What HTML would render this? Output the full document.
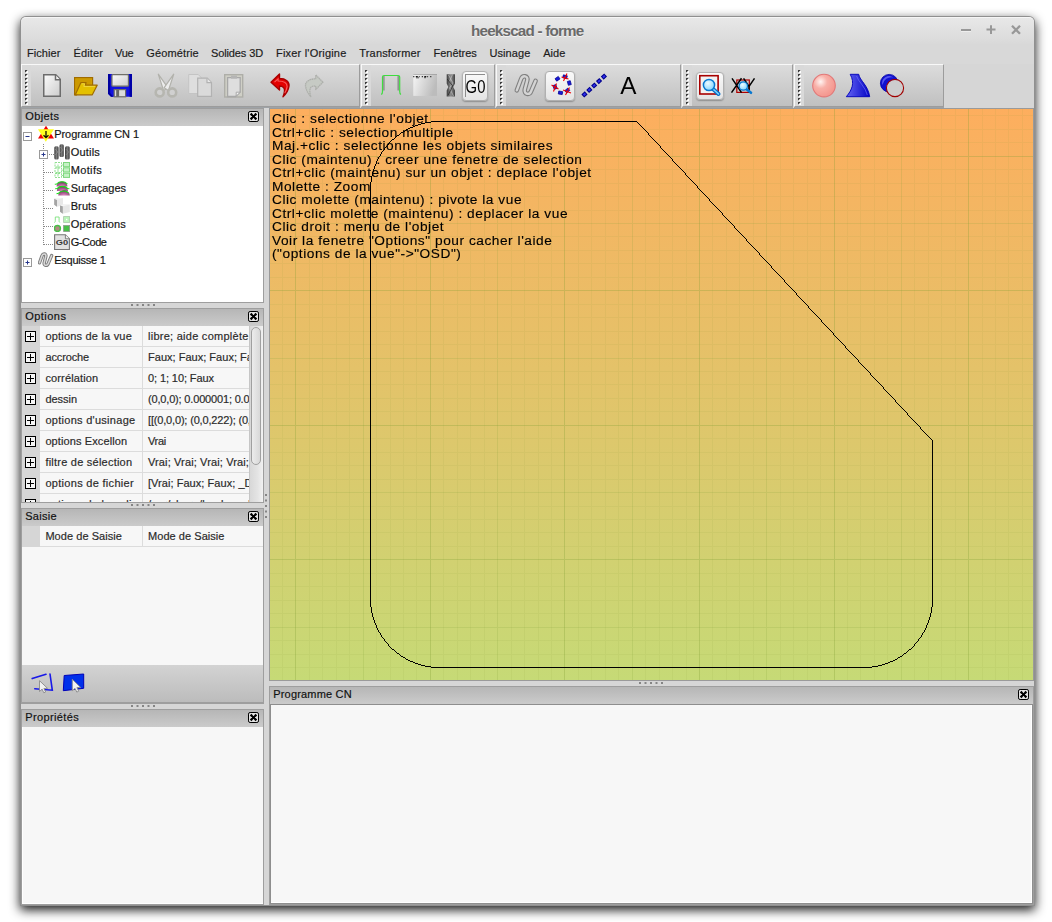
<!DOCTYPE html>
<html>
<head>
<meta charset="utf-8">
<title>heekscad - forme</title>
<style>
*{margin:0;padding:0;box-sizing:border-box;}
html,body{width:1052px;height:922px;overflow:hidden;background:#fff;}
body{font-family:"Liberation Sans",sans-serif;font-size:12px;color:#1a1a1a;position:relative;}
.abs{position:absolute;}
#win{position:absolute;left:21px;top:17px;width:1013px;height:888px;background:#d6d6d6;border-radius:5px 5px 0 0;
 box-shadow:0 0 0 1px #909090, 0 4px 11px 1px rgba(0,0,0,.9);}
#o{position:absolute;left:-21px;top:-17px;width:0;height:0;}
#titlebar{position:absolute;left:21px;top:17px;width:1013px;height:27px;border-radius:5px 5px 0 0;
 background:linear-gradient(#e8e8e8,#d9d9d9);border-top:1px solid #f6f6f6;}
#title{position:absolute;left:471px;top:22px;white-space:nowrap;font-weight:bold;font-size:15.200px;line-height:18px;color:#6a6a6a;text-shadow:0 1px 0 #f2f2f2;letter-spacing:-0.780px;}
.wmin{position:absolute;left:961px;top:29px;width:10px;height:2px;background:#989898;box-shadow:0 1px 0 #eee;}
#menubar{position:absolute;left:21px;top:44px;width:1013px;height:20px;background:#d8d8d8;}
.mi,.tx,.cap,.on,.ov{-webkit-text-stroke:0.180px currentColor;}
.mi{position:absolute;top:47px;font-size:11px;color:#1c1c1c;white-space:nowrap;line-height:13px;}
.tb{position:absolute;top:64px;height:43px;background:linear-gradient(#dcdcdc,#c0c0c0);border-top:1px solid #f8f8f8;border-left:1px solid #f8f8f8;border-bottom:1px solid #9c9c9c;border-right:1px solid #9c9c9c;box-shadow:0 1px 0 #9ea2a6;}
.grip{position:absolute;left:0;top:0;width:9px;height:41px;background:#d9d9d9;}
.grip svg{position:absolute;left:3px;top:5px;}
.ic{position:absolute;top:73px;overflow:visible;width:24px;height:24px;}
.btn{position:absolute;top:69px;width:30px;height:32px;border:1px solid #b0b0b0;border-radius:4px;background:linear-gradient(#fafafa,#e4e4e4);box-shadow:0 1px 1.500px rgba(0,0,0,.28);}
.cap{position:absolute;height:17px;background:linear-gradient(#b6b6b6,#cbcbcb);font-size:11px;line-height:14px;padding-left:3.200px;color:#111;white-space:nowrap;}
.cx{position:absolute;right:4px;top:2px;width:11px;height:11px;}
.pane{position:absolute;background:#f7f7f7;}
.sash{position:absolute;}
.dots{position:absolute;width:23px;height:2px;background-image:linear-gradient(90deg,#8c8c8c 0 2px,transparent 2px 5px);background-size:5px 2px;}
.row{position:absolute;left:0;height:21px;width:227px;}
.prow{position:absolute;font-size:12px;white-space:nowrap;line-height:20px;color:#222;}

.frame{position:absolute;border:1px solid #9e9e9e;background:#c4c4c4;}
.tx{position:absolute;font-size:11px;line-height:14px;white-space:nowrap;color:#141414;}
.vdot{position:absolute;width:1px;background-image:linear-gradient(#888 0 1px,transparent 1px 2px);background-size:1px 2px;}
.hdot{position:absolute;height:1px;background-image:linear-gradient(90deg,#888 0 1px,transparent 1px 2px);background-size:2px 1px;}
.orow{position:absolute;left:0;width:227px;height:21px;background:#d6d6d6;}
.orow .pm{position:absolute;left:3px;top:5px;width:11px;height:11px;}
.orow .on{position:absolute;left:18px;top:0;width:102px;height:20px;background:#f7f7f7;padding-left:5.400px;font-size:11px;line-height:20.500px;white-space:nowrap;overflow:hidden;color:#2a2a2a;border-right:0;}
.orow .ov{position:absolute;left:121px;top:0;width:106px;height:20px;background:#f7f7f7;padding-left:5px;font-size:11px;line-height:20.500px;white-space:nowrap;overflow:hidden;color:#2a2a2a;}
.orow::after{content:"";position:absolute;left:18px;right:0;top:20px;height:1px;background:#dcdcdc;}
.orow::before{content:"";position:absolute;left:120px;top:0;width:1px;height:21px;background:#dcdcdc;}
.sb{position:absolute;left:227px;top:0;width:14px;height:176px;background:linear-gradient(90deg,#d8d8d8,#e4e4e4 60%,#f2f2f2);border-left:1px solid #c6c6c6;}
.sb .th{position:absolute;left:1px;top:1px;width:10px;height:138px;border:1px solid #a0a0a0;border-radius:5px;background:linear-gradient(90deg,#ececec,#d8d8d8);}
</style>
</head>
<body>
<div id="win"><div id="o">
 <div id="titlebar"></div>
 <div id="title">heekscad - forme</div>
 <div class="wmin"></div>
 <svg class="abs" style="left:986px;top:25px" width="10" height="10" viewBox="0 0 10 10"><path d="M0.5 4.5h9M5 0.3v8.6" stroke="#989898" stroke-width="2" fill="none"/></svg>
 <svg class="abs" style="left:1011px;top:25px" width="10" height="10" viewBox="0 0 10 10"><path d="M1 0.8l8 8M9 0.8l-8 8" stroke="#989898" stroke-width="2.3" fill="none"/></svg>
 <div id="menubar"></div>
 <div class="mi" style="left:27px;letter-spacing:0.05px">Fichier</div>
 <div class="mi" style="left:73.6px;letter-spacing:0.11px">Éditer</div>
 <div class="mi" style="left:115px;letter-spacing:-0.22px">Vue</div>
 <div class="mi" style="left:146.3px;letter-spacing:0.13px">Géométrie</div>
 <div class="mi" style="left:211px;letter-spacing:-0.12px">Solides 3D</div>
 <div class="mi" style="left:276px;letter-spacing:0.2px">Fixer l'Origine</div>
 <div class="mi" style="left:359.3px;letter-spacing:0.17px">Transformer</div>
 <div class="mi" style="left:433.5px;letter-spacing:-0.02px">Fenêtres</div>
 <div class="mi" style="left:489.4px;letter-spacing:0.09px">Usinage</div>
 <div class="mi" style="left:543.3px;letter-spacing:-0.01px">Aide</div>

 <div class="tb" style="left:21px;width:339px"><div class="grip"><svg width="3" height="36" viewBox="0 0 3 36"><path d="M0 0h3l-3 3z" fill="#3c3c3c"/><path d="M3 0v3h-3z" fill="#fff"/><path d="M0 4h3l-3 3z" fill="#3c3c3c"/><path d="M3 4v3h-3z" fill="#fff"/><path d="M0 8h3l-3 3z" fill="#3c3c3c"/><path d="M3 8v3h-3z" fill="#fff"/><path d="M0 12h3l-3 3z" fill="#3c3c3c"/><path d="M3 12v3h-3z" fill="#fff"/><path d="M0 16h3l-3 3z" fill="#3c3c3c"/><path d="M3 16v3h-3z" fill="#fff"/><path d="M0 20h3l-3 3z" fill="#3c3c3c"/><path d="M3 20v3h-3z" fill="#fff"/><path d="M0 24h3l-3 3z" fill="#3c3c3c"/><path d="M3 24v3h-3z" fill="#fff"/><path d="M0 28h3l-3 3z" fill="#3c3c3c"/><path d="M3 28v3h-3z" fill="#fff"/><path d="M0 32h3l-3 3z" fill="#3c3c3c"/><path d="M3 32v3h-3z" fill="#fff"/></svg></div></div>
 <div class="tb" style="left:361px;width:134px"><div class="grip"><svg width="3" height="36" viewBox="0 0 3 36"><path d="M0 0h3l-3 3z" fill="#3c3c3c"/><path d="M3 0v3h-3z" fill="#fff"/><path d="M0 4h3l-3 3z" fill="#3c3c3c"/><path d="M3 4v3h-3z" fill="#fff"/><path d="M0 8h3l-3 3z" fill="#3c3c3c"/><path d="M3 8v3h-3z" fill="#fff"/><path d="M0 12h3l-3 3z" fill="#3c3c3c"/><path d="M3 12v3h-3z" fill="#fff"/><path d="M0 16h3l-3 3z" fill="#3c3c3c"/><path d="M3 16v3h-3z" fill="#fff"/><path d="M0 20h3l-3 3z" fill="#3c3c3c"/><path d="M3 20v3h-3z" fill="#fff"/><path d="M0 24h3l-3 3z" fill="#3c3c3c"/><path d="M3 24v3h-3z" fill="#fff"/><path d="M0 28h3l-3 3z" fill="#3c3c3c"/><path d="M3 28v3h-3z" fill="#fff"/><path d="M0 32h3l-3 3z" fill="#3c3c3c"/><path d="M3 32v3h-3z" fill="#fff"/></svg></div></div>
 <div class="tb" style="left:496px;width:185px"><div class="grip"><svg width="3" height="36" viewBox="0 0 3 36"><path d="M0 0h3l-3 3z" fill="#3c3c3c"/><path d="M3 0v3h-3z" fill="#fff"/><path d="M0 4h3l-3 3z" fill="#3c3c3c"/><path d="M3 4v3h-3z" fill="#fff"/><path d="M0 8h3l-3 3z" fill="#3c3c3c"/><path d="M3 8v3h-3z" fill="#fff"/><path d="M0 12h3l-3 3z" fill="#3c3c3c"/><path d="M3 12v3h-3z" fill="#fff"/><path d="M0 16h3l-3 3z" fill="#3c3c3c"/><path d="M3 16v3h-3z" fill="#fff"/><path d="M0 20h3l-3 3z" fill="#3c3c3c"/><path d="M3 20v3h-3z" fill="#fff"/><path d="M0 24h3l-3 3z" fill="#3c3c3c"/><path d="M3 24v3h-3z" fill="#fff"/><path d="M0 28h3l-3 3z" fill="#3c3c3c"/><path d="M3 28v3h-3z" fill="#fff"/><path d="M0 32h3l-3 3z" fill="#3c3c3c"/><path d="M3 32v3h-3z" fill="#fff"/></svg></div></div>
 <div class="tb" style="left:682px;width:111px"><div class="grip"><svg width="3" height="36" viewBox="0 0 3 36"><path d="M0 0h3l-3 3z" fill="#3c3c3c"/><path d="M3 0v3h-3z" fill="#fff"/><path d="M0 4h3l-3 3z" fill="#3c3c3c"/><path d="M3 4v3h-3z" fill="#fff"/><path d="M0 8h3l-3 3z" fill="#3c3c3c"/><path d="M3 8v3h-3z" fill="#fff"/><path d="M0 12h3l-3 3z" fill="#3c3c3c"/><path d="M3 12v3h-3z" fill="#fff"/><path d="M0 16h3l-3 3z" fill="#3c3c3c"/><path d="M3 16v3h-3z" fill="#fff"/><path d="M0 20h3l-3 3z" fill="#3c3c3c"/><path d="M3 20v3h-3z" fill="#fff"/><path d="M0 24h3l-3 3z" fill="#3c3c3c"/><path d="M3 24v3h-3z" fill="#fff"/><path d="M0 28h3l-3 3z" fill="#3c3c3c"/><path d="M3 28v3h-3z" fill="#fff"/><path d="M0 32h3l-3 3z" fill="#3c3c3c"/><path d="M3 32v3h-3z" fill="#fff"/></svg></div></div>
 <div class="tb" style="left:794px;width:150px"><div class="grip"><svg width="3" height="36" viewBox="0 0 3 36"><path d="M0 0h3l-3 3z" fill="#3c3c3c"/><path d="M3 0v3h-3z" fill="#fff"/><path d="M0 4h3l-3 3z" fill="#3c3c3c"/><path d="M3 4v3h-3z" fill="#fff"/><path d="M0 8h3l-3 3z" fill="#3c3c3c"/><path d="M3 8v3h-3z" fill="#fff"/><path d="M0 12h3l-3 3z" fill="#3c3c3c"/><path d="M3 12v3h-3z" fill="#fff"/><path d="M0 16h3l-3 3z" fill="#3c3c3c"/><path d="M3 16v3h-3z" fill="#fff"/><path d="M0 20h3l-3 3z" fill="#3c3c3c"/><path d="M3 20v3h-3z" fill="#fff"/><path d="M0 24h3l-3 3z" fill="#3c3c3c"/><path d="M3 24v3h-3z" fill="#fff"/><path d="M0 28h3l-3 3z" fill="#3c3c3c"/><path d="M3 28v3h-3z" fill="#fff"/><path d="M0 32h3l-3 3z" fill="#3c3c3c"/><path d="M3 32v3h-3z" fill="#fff"/></svg></div></div>
 <!-- new -->
 <svg class="ic" style="left:40px" viewBox="0 0 24 24"><defs><linearGradient id="gp" x1="0" y1="0" x2="1" y2="1"><stop offset="0" stop-color="#fcfcfc"/><stop offset="1" stop-color="#cccccc"/></linearGradient></defs><path d="M3.75 1.75h12l4.5 4.5v17h-16.5z" fill="url(#gp)" stroke="#6c6c6c" stroke-width="1.5"/><path d="M15.5 2v4.7h4.6" fill="#f4f4f4" stroke="#6c6c6c" stroke-width="1.5"/></svg>
 <!-- open -->
 <svg class="ic" style="left:74px" viewBox="0 0 24 24"><path d="M0.6 4.6h18v8h-11l-5 9.2h-2z" fill="#d4a200" stroke="#a06c00" stroke-width="1.2"/><path d="M2.2 6.2h15v6.4h-10l-5 8.5z" fill="#c49000" opacity=".5"/><path d="M6.9 9.6h5.2l-.8 2.6h11.9l-4.9 9.6h-17z" fill="#e4c000" stroke="#a06c00" stroke-width="1.2" stroke-linejoin="round"/><path d="M7.6 10.8h3l-.8 2.6h11.2" fill="none" stroke="#f2dc50" stroke-width=".8"/></svg>
 <!-- save -->
 <svg class="ic" style="left:108px" viewBox="0 0 24 24"><path d="M0 1h24v22.8h-21l-3-3z" fill="#1212e0"/><path d="M0 1h2.2v19l3.2 3.8h-2.4l-3-3z" fill="#0000a0"/><rect x="21.6" y="1" width="2.4" height="22.8" fill="#0000a8"/><rect x="3.9" y="1.6" width="16.6" height="11.6" rx="1" fill="url(#gp)" stroke="#707068" stroke-width="1.3"/><rect x="6.2" y="16.6" width="11.4" height="7.2" fill="#dcdcdc" stroke="#707068" stroke-width="1.2"/><rect x="8.2" y="17" width="2.9" height="6.8" fill="#666"/></svg>
 <!-- cut -->
 <svg class="ic" style="left:154px" viewBox="0 0 24 24"><path d="M4.300 1.200L14 14.800L9.600 17.600z" fill="#ececec" stroke="#b2b2ac" stroke-width="1.200" stroke-linejoin="round"/><path d="M19.700 1.200L10 14.800L14.400 17.600z" fill="#ececec" stroke="#b2b2ac" stroke-width="1.200" stroke-linejoin="round"/><circle cx="5.7" cy="19.4" r="4" fill="#d0d0d0" stroke="#b6b6b0" stroke-width="2.6"/><circle cx="18.2" cy="19.4" r="4" fill="#d0d0d0" stroke="#b6b6b0" stroke-width="2.6"/></svg>
 <!-- copy -->
 <svg class="ic" style="left:188px" viewBox="0 0 24 24"><path d="M0.7 1.5h9.5l3 3v16h-12.5z" fill="#dedede" stroke="#c4c4c4"/><path d="M9.7 5.2h9.6l4.2 4.2v14h-13.8z" fill="#dadada" stroke="#b2b2b2" stroke-width="1.2"/><path d="M19 5.4v4.2h4.3" fill="#e8e8e8" stroke="#b2b2b2" stroke-width="1.2"/></svg>
 <!-- paste -->
 <svg class="ic" style="left:222px" viewBox="0 0 24 24"><rect x="2.7" y="1.7" width="18" height="22.3" fill="#cfcfc6" stroke="#aeaea8" stroke-width="1.4"/><path d="M5.6 4.6h12.6v14.4l-4.5 4.5h-8.1z" fill="#dedede" stroke="#a8a8a8" stroke-width="1.3"/><rect x="9" y="2.6" width="6" height="3" fill="#b4b4b4"/><path d="M14.2 23.2v-4h4z" fill="#f6f6f6" stroke="#a8a8a8"/></svg>
 <!-- undo -->
 <svg class="ic" style="left:268px" viewBox="0 0 24 24"><path d="M3 9.2L11.5 1V5.5C18 5.5 21.5 9 21 13C20.5 17 18 21 15 23.8C16.5 20 17 16 15.5 14.5C14.5 13.2 13 13 11.5 13V17Z" fill="#e40000" stroke="#a80000" stroke-width="1.4" stroke-linejoin="round"/><path d="M6.5 9.2l3.6-3.4v2.2c6 0 9 2.500 9 5.600c-.3 2.500-1.400 4.800-2.400 6.300" fill="none" stroke="#ff7070" stroke-width="1.1" opacity=".8"/></svg>
 <!-- redo -->
 <svg class="ic" style="left:302px" viewBox="0 0 24 24"><path d="M20.9 9.2L13.7 1.9V5.8C8 5.8 3.2 8.500 3.500 12.500C3.800 16.500 6 20.500 8.800 23.500C7.500 20 7.500 16 9 14.200C10.200 13 12 13 13.700 13V16.500Z" fill="#c6cac4" stroke="#aeb0ac" stroke-width="1.3" stroke-linejoin="round" stroke-dasharray="1.6 0.5"/></svg>
 <!-- profile -->
 <svg class="ic" style="left:379px" viewBox="0 0 24 24"><path d="M4.9 3v14.500M19.200 3v14.500" stroke="#8a8a8a" stroke-width="1.4" fill="none"/><path d="M2.300 21.500c1.200-.8 1.200-1.500 1.200-3v-14.500c0-1 .5-1.500 1.500-1.500h14.200c1 0 1.500.5 1.500 1.500v14.500c0 1.500 0 2.200 1.200 3" stroke="#3fdc3f" stroke-width="1.2" fill="none"/></svg>
 <!-- pocket -->
 <svg class="ic" style="left:412px" viewBox="0 0 24 24"><defs><linearGradient id="gk" x1="0" y1="0" x2="1" y2=".3"><stop offset="0" stop-color="#f6f6f6"/><stop offset="1" stop-color="#bcbcbc"/></linearGradient></defs><rect x="1.300" y="1.200" width="23.700" height="21.700" fill="url(#gk)"/><path d="M1.300 1.500h23.700" stroke="#909090" stroke-width=".6"/><path d="M1.300 3.600h18" stroke="#111" stroke-width="1.100" stroke-dasharray="1 1.500 2 1 .8 2.200"/><path d="M4 4.800h3M12 4.700h2" stroke="#333" stroke-width=".8"/></svg>
 <!-- drill -->
 <svg class="ic" style="left:440px" viewBox="0 0 24 24"><defs><linearGradient id="gd" x1="0" y1="0" x2="1" y2="0"><stop offset="0" stop-color="#3c3c3c"/><stop offset=".5" stop-color="#8e8e8e"/><stop offset="1" stop-color="#404040"/></linearGradient></defs><path d="M6.700 1.200h8.300v9.300l-1.800 3.500l1.800 3.500v6.100h-8.300v-6.100l1.600-3.500l-1.600-3.500z" fill="url(#gd)"/><path d="M8.500 2l4.500 8l-3.500 5l4 8M12.500 1.500l-3 7" stroke="#c8c8c8" stroke-width=".9" fill="none" opacity=".7"/><path d="M7.200 6l5.500 7l-4.500 9" stroke="#222" stroke-width="1" fill="none" opacity=".7"/></svg>
 <!-- G0 -->
 <div class="btn" style="left:462px;top:70.500px;width:26px;height:30px"></div>
 <div class="abs" style="left:465px;top:74px;width:20px;height:1px;background:#8c8c8c"></div>
 <div class="abs" style="left:465px;top:74px;width:1px;height:23px;background:#8c8c8c"></div>
 <svg class="abs" style="left:462px;top:70px;will-change:transform" width="28" height="32" viewBox="0 0 28 32"><text x="3.600" y="22.900" font-family="Liberation Sans" font-size="18.500" fill="#000" textLength="19.800" lengthAdjust="spacingAndGlyphs">G0</text></svg>
 <!-- sketch -->
 <svg class="ic" style="left:514px" viewBox="0 0 24 24"><path d="M2.800 17.300L7 6.200C8.600 1.800 14.600 2.600 13.200 7.600L10.800 16.400C9.600 21.400 15.600 22.600 17.300 17.800L21.600 7.800" fill="none" stroke="#808080" stroke-width="4.600" stroke-linecap="round"/><path d="M2.800 17.300L7 6.200C8.600 1.800 14.600 2.600 13.200 7.600L10.800 16.400C9.600 21.400 15.600 22.600 17.300 17.800L21.600 7.800" fill="none" stroke="#d4d4d4" stroke-width="2.400" stroke-linecap="round"/></svg>
 <!-- dots -->
 <div class="btn" style="left:545px;top:70.500px;width:30px;height:30px"></div>
 <svg class="ic" style="left:548px" viewBox="0 0 24 24"><g fill="#1818d8" stroke="#000090" stroke-width=".7"><rect x="-2" y="-1.500" width="4" height="3" transform="translate(9.500 5.800) rotate(-35)"/><rect x="-2" y="-1.500" width="4" height="3" transform="translate(17 3.800) rotate(15)"/><rect x="-2" y="-1.500" width="4" height="3" transform="translate(21.300 10) rotate(75)"/><rect x="-2" y="-1.500" width="4" height="3" transform="translate(19.300 17.500) rotate(-40)"/><rect x="-2" y="-1.500" width="4" height="3" transform="translate(12.500 19.800) rotate(10)"/><rect x="-2" y="-1.500" width="4" height="3" transform="translate(7 14) rotate(70)"/></g><g stroke="#f00000" stroke-width="1.100" fill="none"><path d="M13.500 4l7 2M19 0.500l-3.500 7.500"/><path d="M3.500 12l7 4M8.500 10.500l-3 8"/><path d="M15 17l8 3M21.500 14.500l-4 7.500"/></g></svg>
 <!-- dashed -->
 <svg class="ic" style="left:582px" viewBox="0 0 24 24"><path d="M0.800 23L23.600 2" stroke="#00008c" stroke-width="4.200" stroke-dasharray="4.600 2" fill="none"/><path d="M1.540 22.320L23.600 2" stroke="#3030f0" stroke-width="2" stroke-dasharray="2.600 4" fill="none"/></svg>
 <!-- A -->
 <svg class="abs" style="left:616px;top:70px;will-change:transform" width="26" height="30" viewBox="0 0 26 30"><text x="4.200" y="24" font-family="Liberation Sans" font-size="24.300" fill="#000">A</text></svg>
 <!-- zoom -->
 <div class="btn" style="left:696px;top:71.500px;width:28px;height:28.500px"></div>
 <svg class="ic" style="left:698px" viewBox="0 0 24 24"><defs><radialGradient id="gz" cx=".4" cy=".35" r=".7"><stop offset="0" stop-color="#ecfaff"/><stop offset="1" stop-color="#7ed4ff"/></radialGradient></defs><rect x="1.800" y="2.700" width="18.300" height="18.300" fill="#f2f2f2" stroke="#a80000" stroke-width="1.600"/><path d="M15 16l5.500 5" stroke="#0870c8" stroke-width="4" stroke-linecap="round"/><path d="M15 16l5.500 5" stroke="#7ed4ff" stroke-width="1.600" stroke-linecap="round"/><circle cx="11" cy="12" r="5.600" fill="url(#gz)" stroke="#0878d0" stroke-width="1.500"/></svg>
 <!-- XY -->
 <svg class="ic" style="left:731px" viewBox="0 0 24 24"><rect x="5.800" y="7" width="12.500" height="12.400" fill="none" stroke="#b00000" stroke-width="1.200"/><path d="M1 5.300l9.500 14.300M10.500 5.300L0.500 19.600" stroke="#000" stroke-width="1.500" fill="none"/><path d="M12.600 5.300l5.400 8l5.500-8M18 13.300v6.300" stroke="#000" stroke-width="1.500" fill="none"/><path d="M15.500 16.200l4.500 3.600" stroke="#0878d0" stroke-width="2.600" stroke-linecap="round"/><circle cx="12.300" cy="13" r="4.200" fill="url(#gz)" stroke="#0878d0" stroke-width="1.200"/></svg>
 <!-- sphere -->
 <svg class="ic" style="left:812px" viewBox="0 0 24 24"><defs><radialGradient id="gs" cx=".35" cy=".33" r=".65"><stop offset="0" stop-color="#fff4f2"/><stop offset=".45" stop-color="#f8b0a8"/><stop offset="1" stop-color="#f49890"/></radialGradient></defs><circle cx="12" cy="12.600" r="11.300" fill="url(#gs)" stroke="#e27878" stroke-width="1.100"/></svg>
 <!-- vase -->
 <svg class="ic" style="left:846px" viewBox="0 0 24 24"><defs><linearGradient id="gv" x1="0" y1="0" x2="1" y2="0"><stop offset="0" stop-color="#6464f4"/><stop offset="1" stop-color="#0404c4"/></linearGradient></defs><path d="M4.200 1.300h8.500C14 8 22 12 23.700 23.700H0.300C6 17 9 10 4.200 1.300Z" fill="url(#gv)" stroke="#0000b8" stroke-width=".9"/><path d="M10.500 3c2 6 9 11 10.800 19" fill="none" stroke="#8080ff" stroke-width=".8" opacity=".7"/></svg>
 <!-- circles -->
 <svg class="ic" style="left:880px" viewBox="0 0 24 24"><circle cx="9.200" cy="10.200" r="8.800" fill="#1010d0" stroke="#0000a8" stroke-width=".8"/><path d="M2.500 12a7 7 0 0 1 11-7.500a9 9 0 0 0-11 7.500z" fill="#6868f8" opacity=".8"/><circle cx="15" cy="15" r="8.600" fill="#cdcdcd" stroke="#a00000" stroke-width="1.100"/></svg>
 <!--ICONS2-->
 <div class="frame" style="left:21px;top:108px;width:243px;height:195px"></div>
 <div class="frame" style="left:21px;top:308px;width:243px;height:195px"></div>
 <div class="frame" style="left:21px;top:508px;width:243px;height:196px;border-bottom-width:2px"></div>
 <div class="frame" style="left:21px;top:709px;width:243px;height:196px"></div>
 <div class="cap" style="left:22px;top:109px;width:241px"><span style="letter-spacing:0.4px">Objets</span><svg class="cx" viewBox="0 0 11 11"><rect x=".5" y=".5" width="10" height="10" rx="1.6" fill="#e4e4e4" stroke="#000"/><path d="M2.600 2.600l5.800 5.800M8.400 2.600l-5.800 5.800" stroke="#000" stroke-width="2.200"/><path d="M1.800 5.500h2M7.200 5.500h2M5.500 1.800v2M5.500 7.200v2" stroke="#e4e4e4" stroke-width="1.200"/></svg></div>
 <div class="pane" style="left:22px;top:126px;width:241px;height:176px;background:#fff"></div>
 <div class="vdot" style="left:43px;top:144px;height:101px"></div>
 <div class="hdot" style="left:49px;top:154px;width:5px"></div>
 <div class="hdot" style="left:44px;top:172px;width:10px"></div>
 <div class="hdot" style="left:44px;top:190px;width:10px"></div>
 <div class="hdot" style="left:44px;top:208px;width:10px"></div>
 <div class="hdot" style="left:44px;top:226px;width:10px"></div>
 <div class="hdot" style="left:44px;top:244px;width:10px"></div>
 <svg class="abs" style="left:23px;top:132px" width="9" height="9" viewBox="0 0 9 9"><rect x=".5" y=".5" width="8" height="8" fill="#fff" stroke="#9a9a9a"/><g stroke="#28388c" stroke-width="1" fill="none"><path d="M2.500 4.500h4"/></g></svg>
 <svg class="abs" style="left:39px;top:150px" width="9" height="9" viewBox="0 0 9 9"><rect x=".5" y=".5" width="8" height="8" fill="#fff" stroke="#9a9a9a"/><g stroke="#28388c" stroke-width="1" fill="none"><path d="M2.500 4.500h4"/><path d="M4.500 2.500v4" /></g></svg>
 <svg class="abs" style="left:23px;top:258px" width="9" height="9" viewBox="0 0 9 9"><rect x=".5" y=".5" width="8" height="8" fill="#fff" stroke="#9a9a9a"/><g stroke="#28388c" stroke-width="1" fill="none"><path d="M2.500 4.500h4"/><path d="M4.500 2.500v4" /></g></svg>
 <div class="tx" style="left:54.200px;top:127px;letter-spacing:-0.050px">Programme CN 1</div>
 <div class="tx" style="left:70.7px;top:145px;letter-spacing:0.21px">Outils</div>
 <div class="tx" style="left:70.7px;top:163px;letter-spacing:0.36px">Motifs</div>
 <div class="tx" style="left:70.7px;top:181px;letter-spacing:-0.04px">Surfaçages</div>
 <div class="tx" style="left:70.7px;top:199px;letter-spacing:0.1px">Bruts</div>
 <div class="tx" style="left:70.7px;top:217px;letter-spacing:0.15px">Opérations</div>
 <div class="tx" style="left:70.7px;top:235px;letter-spacing:-0.46px">G-Code</div>
 <div class="tx" style="left:54.200px;top:253px;letter-spacing:-0.240px">Esquisse 1</div>
 <svg class="abs" style="left:38px;top:126px" width="16" height="16" viewBox="0 0 16 16"><path d="M8 -0.300L16 12.500H0Z" fill="#f00000"/><path d="M0 3.200H16L7.800 15.700Z" fill="#ffff20"/><path d="M8 5v6.500M5.500 9.200l2.500 2.500l2.500-2.500" stroke="#101000" stroke-width="1.300" fill="none"/></svg>
 <svg class="abs" style="left:54px;top:144px" width="16" height="16" viewBox="0 0 16 16"><defs><linearGradient id="gt" x1="0" y1="0" x2="1" y2="0"><stop offset="0" stop-color="#3a3a3a"/><stop offset=".5" stop-color="#7c7c7c"/><stop offset="1" stop-color="#3c3c3c"/></linearGradient></defs><rect x=".3" y="2.300" width="4.300" height="13.200" rx="1.500" fill="url(#gt)"/><rect x="5.500" y=".2" width="4.300" height="12.800" rx="1.500" fill="url(#gt)"/><rect x="11" y="2.300" width="4.700" height="13.200" rx="1.500" fill="url(#gt)"/><path d="M1 5l3 3l-3 3M6.200 3l3 3l-3 3M11.800 5l3 3l-3 3" stroke="#9a9a9a" stroke-width=".7" fill="none" opacity=".7"/></svg>
 <svg class="abs" style="left:54px;top:162px" width="16" height="16" viewBox="0 0 16 16"><g fill="none" stroke="#8fe08f" stroke-width="1" stroke-dasharray="2 1"><path d="M1 .5h6.500v4.500h-6.500zM1 6h6.500v4.500h-6.500zM1 11.500h6.500v4h-6.500z"/></g><g fill="#c4f2c4" stroke="#7cd67c" stroke-width="1"><rect x="9.500" y=".5" width="6" height="4.200"/><rect x="9.500" y="5.800" width="6" height="4.200"/><rect x="9.500" y="11.200" width="6" height="4.200"/></g><path d="M4 2.500v12M7.500 3h2M7.500 8.200h2M7.500 13.500h2" stroke="#8fe08f" stroke-width=".9" fill="none"/></svg>
 <svg class="abs" style="left:54px;top:180px" width="16" height="16" viewBox="0 0 16 16"><defs><radialGradient id="gm" cx=".5" cy=".9" r=".9"><stop offset="0" stop-color="#e07cc0"/><stop offset="1" stop-color="#5a3850"/></radialGradient></defs><path d="M2.500 6.500a5.500 5 0 0 1 11 0z" fill="url(#gm)"/><path d="M.8 4.200l1.800-.2a6.500 5 0 0 1 10.800 0" stroke="#18e018" stroke-width="1.100" fill="none"/><path d="M2.800 11a5.600 5 0 0 1 11.200 0z" fill="url(#gm)"/><path d="M1.200 8.800l1.800-.2a6.500 5 0 0 1 10.800 0l1.600.2" stroke="#18e018" stroke-width="1.100" fill="none"/><path d="M4.200 15.500a5.800 5.200 0 0 1 11.600 0z" fill="url(#gm)"/><path d="M2.600 13.600l1.800-.3a6 4.600 0 0 1 10-.5" stroke="#18e018" stroke-width="1.100" fill="none"/></svg>
 <svg class="abs" style="left:54px;top:198px" width="16" height="16" viewBox="0 0 16 16"><path d="M.2 .8l2.800-.8h6l0 7.200l-6 1.600l-2.800-2z" fill="#e8e8e8"/><path d="M.2 .8l2.800 1v7l-2.800-2z" fill="#a4a4a4"/><path d="M.2 .8l2.800-.8h6l-6 1.800z" fill="#f4f4f4"/><path d="M6 7.300l2.800-.9h7l0 7.600l-7 1.800l-2.800-2z" fill="#e6e6e6"/><path d="M6 7.300l2.800 1v7.500l-2.800-2z" fill="#a4a4a4"/><path d="M6 7.300l2.800-.9h7l-7 1.900z" fill="#f6f6f6"/></svg>
 <svg class="abs" style="left:54px;top:216px" width="16" height="16" viewBox="0 0 16 16"><path d="M.3 6.500c.9-.4 1-.8 1-1.800v-3.700h3.800v3.700c0 1 .1 1.400 1 1.800" stroke="#7de27d" stroke-width=".9" fill="none"/><rect x="9.600" y=".6" width="6" height="5.800" fill="#b8f4b8" stroke="#a8c8a8" stroke-width=".8"/><rect x="12" y="2.800" width="1.400" height="1.400" fill="#fff"/><circle cx="3.400" cy="12.400" r="3" fill="#b08a80" stroke="#48c048" stroke-width="1.500"/><rect x="9.600" y="9.500" width="6" height="6" fill="#48c048" stroke="#8a9a8a" stroke-width=".8"/></svg>
 <svg class="abs" style="left:54px;top:234px" width="16" height="16" viewBox="0 0 16 16"><path d="M.6 .8h10.800l4 4v10.700h-14.800z" fill="#e2e2e2" stroke="#767676" stroke-width="1.100"/><path d="M11.400 .8v4h4" fill="#f0f0f0" stroke="#767676" stroke-width=".9"/><text x="1.800" y="11.300" font-family="Liberation Sans" font-weight="bold" font-size="7.800" fill="#3a3a3a" textLength="12.400" lengthAdjust="spacingAndGlyphs">G0</text></svg>
 <svg class="abs" style="left:38px;top:252px" width="16" height="16" viewBox="0 0 16 16"><path d="M1.500 10.800L4 3.800C5 1 8.500 1.500 7.800 4.500L6.200 10.800C5.600 13.800 9.400 14.200 10.300 11.400L13.600 3.600" fill="none" stroke="#7c7c7c" stroke-width="3.400" stroke-linecap="round"/><path d="M1.500 10.800L4 3.800C5 1 8.500 1.500 7.800 4.500L6.200 10.800C5.600 13.800 9.400 14.200 10.300 11.400L13.600 3.600" fill="none" stroke="#dadada" stroke-width="1.500" stroke-linecap="round"/></svg>
 <div class="cap" style="left:22px;top:309px;width:241px"><span style="letter-spacing:0.47px">Options</span><svg class="cx" viewBox="0 0 11 11"><rect x=".5" y=".5" width="10" height="10" rx="1.6" fill="#e4e4e4" stroke="#000"/><path d="M2.600 2.600l5.800 5.800M8.400 2.600l-5.800 5.800" stroke="#000" stroke-width="2.200"/><path d="M1.800 5.500h2M7.200 5.500h2M5.500 1.800v2M5.500 7.200v2" stroke="#e4e4e4" stroke-width="1.200"/></svg></div>
 <div class="pane" style="left:22px;top:326px;width:241px;height:176px;overflow:hidden" id="opt">
  <div class="orow" style="top:0px"><svg class="pm" viewBox="0 0 11 11"><rect x=".5" y=".5" width="10" height="10" fill="#f7f7f7" stroke="#000"/><path d="M2 5.500h7M5.500 2v7" stroke="#000" stroke-width="1"/></svg><div class="on" style="letter-spacing:0.2px">options de la vue</div><div class="ov" style="letter-spacing:0.26px">libre; aide complète</div></div>
  <div class="orow" style="top:21px"><svg class="pm" viewBox="0 0 11 11"><rect x=".5" y=".5" width="10" height="10" fill="#f7f7f7" stroke="#000"/><path d="M2 5.500h7M5.500 2v7" stroke="#000" stroke-width="1"/></svg><div class="on" style="letter-spacing:-0.12px">accroche</div><div class="ov" style="letter-spacing:0.020px">Faux; Faux; Faux; Faux</div></div>
  <div class="orow" style="top:42px"><svg class="pm" viewBox="0 0 11 11"><rect x=".5" y=".5" width="10" height="10" fill="#f7f7f7" stroke="#000"/><path d="M2 5.500h7M5.500 2v7" stroke="#000" stroke-width="1"/></svg><div class="on" style="letter-spacing:0.14px">corrélation</div><div class="ov" style="letter-spacing:-0.1px">0; 1; 10; Faux</div></div>
  <div class="orow" style="top:63px"><svg class="pm" viewBox="0 0 11 11"><rect x=".5" y=".5" width="10" height="10" fill="#f7f7f7" stroke="#000"/><path d="M2 5.500h7M5.500 2v7" stroke="#000" stroke-width="1"/></svg><div class="on" style="letter-spacing:-0.03px">dessin</div><div class="ov" style="letter-spacing:-0.170px">(0,0,0); 0.000001; 0.000001</div></div>
  <div class="orow" style="top:84px"><svg class="pm" viewBox="0 0 11 11"><rect x=".5" y=".5" width="10" height="10" fill="#f7f7f7" stroke="#000"/><path d="M2 5.500h7M5.500 2v7" stroke="#000" stroke-width="1"/></svg><div class="on" style="letter-spacing:0.28px">options d'usinage</div><div class="ov" style="letter-spacing:-0.170px">[[(0,0,0); (0,0,222); (0,0,0)</div></div>
  <div class="orow" style="top:105px"><svg class="pm" viewBox="0 0 11 11"><rect x=".5" y=".5" width="10" height="10" fill="#f7f7f7" stroke="#000"/><path d="M2 5.500h7M5.500 2v7" stroke="#000" stroke-width="1"/></svg><div class="on" style="letter-spacing:0.11px">options Excellon</div><div class="ov" style="letter-spacing:-0.31px">Vrai</div></div>
  <div class="orow" style="top:126px"><svg class="pm" viewBox="0 0 11 11"><rect x=".5" y=".5" width="10" height="10" fill="#f7f7f7" stroke="#000"/><path d="M2 5.500h7M5.500 2v7" stroke="#000" stroke-width="1"/></svg><div class="on" style="letter-spacing:0.23px">filtre de sélection</div><div class="ov" style="letter-spacing:0.130px">Vrai; Vrai; Vrai; Vrai; Vrai</div></div>
  <div class="orow" style="top:147px"><svg class="pm" viewBox="0 0 11 11"><rect x=".5" y=".5" width="10" height="10" fill="#f7f7f7" stroke="#000"/><path d="M2 5.500h7M5.500 2v7" stroke="#000" stroke-width="1"/></svg><div class="on" style="letter-spacing:0.3px">options de fichier</div><div class="ov" style="letter-spacing:0.050px">[Vrai; Faux; Faux; _Defaut</div></div>
  <div class="orow" style="top:168px"><svg class="pm" viewBox="0 0 11 11"><rect x=".5" y=".5" width="10" height="10" fill="#f7f7f7" stroke="#000"/><path d="M2 5.500h7M5.500 2v7" stroke="#000" stroke-width="1"/></svg><div class="on" style="letter-spacing:0.2px">options de la police</div><div class="ov" style="letter-spacing:0.2px">/usr/share/heekscad/f</div></div>
  <div class="sb"><div class="th"></div></div>
 </div>
 <div class="cap" style="left:22px;top:509px;width:241px"><span style="letter-spacing:0.31px">Saisie</span><svg class="cx" viewBox="0 0 11 11"><rect x=".5" y=".5" width="10" height="10" rx="1.6" fill="#e4e4e4" stroke="#000"/><path d="M2.600 2.600l5.800 5.800M8.400 2.600l-5.800 5.800" stroke="#000" stroke-width="2.200"/><path d="M1.800 5.500h2M7.200 5.500h2M5.500 1.800v2M5.500 7.200v2" stroke="#e4e4e4" stroke-width="1.200"/></svg></div>
 <div class="pane" style="left:22px;top:526px;width:241px;height:176px;overflow:hidden">
  <div class="orow" style="top:0;width:241px"><div class="on" style="letter-spacing:0.05px">Mode de Saisie</div><div class="ov" style="width:120px;letter-spacing:0.05px">Mode de Saisie</div></div>
  <div class="abs" style="left:0;top:139px;width:241px;height:37px;background:linear-gradient(#d3d3d3,#bcbcbc)"></div>
 </div>
 <svg class="abs" style="left:30px;top:672px" width="24" height="24" viewBox="0 0 24 24"><path d="M2.200 6.600L16 2.200M20 2l2.300 16.200L4.800 16.800" stroke="#1818e8" stroke-width="1.600" fill="none" stroke-linecap="round"/><path d="M9.500 8.700v10.800l2.600-2.300l1.700 3.600l1.800-.8l-1.700-3.500l3.600-.2z" fill="#f2f2f2" stroke="#8a8a8a" stroke-width=".9"/></svg>
 <svg class="abs" style="left:62px;top:672px" width="24" height="24" viewBox="0 0 24 24"><path d="M2.200 3.500L21.700 2V16.300L1.300 18.700Z" fill="#0030ea" stroke="#0000b8" stroke-width="1"/><path d="M10.300 7.300v11.500l2.700-2.400l1.800 3.700l1.900-.9l-1.800-3.600l3.700-.2z" fill="#f2f2f2" stroke="#8a8a8a" stroke-width=".9"/></svg>
 <div class="cap" style="left:22px;top:710px;width:241px"><span style="letter-spacing:0.38px">Propriétés</span><svg class="cx" viewBox="0 0 11 11"><rect x=".5" y=".5" width="10" height="10" rx="1.6" fill="#e4e4e4" stroke="#000"/><path d="M2.600 2.600l5.800 5.800M8.400 2.600l-5.800 5.800" stroke="#000" stroke-width="2.200"/><path d="M1.800 5.500h2M7.200 5.500h2M5.500 1.800v2M5.500 7.200v2" stroke="#e4e4e4" stroke-width="1.200"/></svg></div>
 <div class="pane" style="left:22px;top:727px;width:241px;height:177px;box-shadow:inset 1px -1px 0 #fff"></div>
 <svg class="abs" style="left:131px;top:304px" width="25" height="2" viewBox="0 0 25 2"><rect x="0" y="0" width="2" height="2" fill="#858585"/><rect x="5.5" y="0" width="2" height="2" fill="#858585"/><rect x="11" y="0" width="2" height="2" fill="#858585"/><rect x="16.5" y="0" width="2" height="2" fill="#858585"/><rect x="22" y="0" width="2" height="2" fill="#858585"/></svg>
 <svg class="abs" style="left:131px;top:504px" width="25" height="2" viewBox="0 0 25 2"><rect x="0" y="0" width="2" height="2" fill="#858585"/><rect x="5.5" y="0" width="2" height="2" fill="#858585"/><rect x="11" y="0" width="2" height="2" fill="#858585"/><rect x="16.5" y="0" width="2" height="2" fill="#858585"/><rect x="22" y="0" width="2" height="2" fill="#858585"/></svg>
 <svg class="abs" style="left:131px;top:705px" width="25" height="2" viewBox="0 0 25 2"><rect x="0" y="0" width="2" height="2" fill="#858585"/><rect x="5.5" y="0" width="2" height="2" fill="#858585"/><rect x="11" y="0" width="2" height="2" fill="#858585"/><rect x="16.5" y="0" width="2" height="2" fill="#858585"/><rect x="22" y="0" width="2" height="2" fill="#858585"/></svg>
 <div class="abs" style="left:269px;top:108px;width:765px;height:573px;background:#9a9a9a"></div>
 <div class="abs" style="left:270px;top:109px;width:763px;height:571px;background:linear-gradient(rgb(253,174,94),rgb(198,218,118))"></div>
 <svg class="abs" style="left:270px;top:109px" width="763" height="571" viewBox="270 109 763 571" shape-rendering="crispEdges"><path d="M282 109h1v571h-1zM309 109h1v571h-1zM322 109h1v571h-1zM336 109h1v571h-1zM349 109h1v571h-1zM376 109h1v571h-1zM390 109h1v571h-1zM403 109h1v571h-1zM416 109h1v571h-1zM443 109h1v571h-1zM457 109h1v571h-1zM470 109h1v571h-1zM484 109h1v571h-1zM511 109h1v571h-1zM524 109h1v571h-1zM538 109h1v571h-1zM551 109h1v571h-1zM578 109h1v571h-1zM591 109h1v571h-1zM605 109h1v571h-1zM618 109h1v571h-1zM645 109h1v571h-1zM659 109h1v571h-1zM672 109h1v571h-1zM686 109h1v571h-1zM712 109h1v571h-1zM726 109h1v571h-1zM739 109h1v571h-1zM753 109h1v571h-1zM780 109h1v571h-1zM793 109h1v571h-1zM807 109h1v571h-1zM820 109h1v571h-1zM847 109h1v571h-1zM860 109h1v571h-1zM874 109h1v571h-1zM887 109h1v571h-1zM914 109h1v571h-1zM928 109h1v571h-1zM941 109h1v571h-1zM955 109h1v571h-1zM982 109h1v571h-1zM995 109h1v571h-1zM1008 109h1v571h-1zM1022 109h1v571h-1zM270 115h763v1h-763zM270 129h763v1h-763zM270 142h763v1h-763zM270 169h763v1h-763zM270 183h763v1h-763zM270 196h763v1h-763zM270 210h763v1h-763zM270 236h763v1h-763zM270 250h763v1h-763zM270 263h763v1h-763zM270 277h763v1h-763zM270 304h763v1h-763zM270 317h763v1h-763zM270 331h763v1h-763zM270 344h763v1h-763zM270 371h763v1h-763zM270 384h763v1h-763zM270 398h763v1h-763zM270 411h763v1h-763zM270 438h763v1h-763zM270 452h763v1h-763zM270 465h763v1h-763zM270 479h763v1h-763zM270 506h763v1h-763zM270 519h763v1h-763zM270 532h763v1h-763zM270 546h763v1h-763zM270 573h763v1h-763zM270 586h763v1h-763zM270 600h763v1h-763zM270 613h763v1h-763zM270 640h763v1h-763zM270 654h763v1h-763zM270 667h763v1h-763z" fill="rgb(130,158,54)" fill-opacity="0.09"/><path d="M363 109h1v571h-1zM497 109h1v571h-1zM632 109h1v571h-1zM766 109h1v571h-1zM901 109h1v571h-1zM270 223h763v1h-763zM270 358h763v1h-763zM270 492h763v1h-763zM270 627h763v1h-763z" fill="rgb(130,158,54)" fill-opacity="0.18"/><path d="M295 109h1v571h-1zM430 109h1v571h-1zM564 109h1v571h-1zM699 109h1v571h-1zM834 109h1v571h-1zM968 109h1v571h-1zM270 156h763v1h-763zM270 290h763v1h-763zM270 425h763v1h-763zM270 559h763v1h-763z" fill="rgb(130,158,54)" fill-opacity="0.3"/><path d="M439 121h198v1h-198zM932 441h1v158h-1zM439 667h425v1h-425zM370 190h1v409h-1zM370 182h1v9h-1zM370 598h1v9h-1zM371 176h1v6h-1zM371 607h1v6h-1zM372 172h1v4h-1zM372 613h1v4h-1zM373 169h1v3h-1zM373 617h1v3h-1zM374 166h1v3h-1zM374 620h1v3h-1zM375 164h1v2h-1zM375 623h1v2h-1zM376 161h1v3h-1zM376 625h1v3h-1zM377 159h1v2h-1zM377 628h1v2h-1zM378 157h1v2h-1zM378 630h1v2h-1zM380 154h1v2h-1zM380 633h1v2h-1zM381 152h1v2h-1zM381 635h1v2h-1zM384 148h1v2h-1zM384 639h1v2h-1zM388 143h1v2h-1zM388 644h1v2h-1zM648 133h1v2h-1zM660 146h1v2h-1zM672 159h1v2h-1zM685 173h1v2h-1zM697 186h1v2h-1zM709 199h1v2h-1zM722 213h1v2h-1zM734 226h1v2h-1zM746 239h1v2h-1zM759 253h1v2h-1zM771 266h1v2h-1zM784 280h1v2h-1zM796 293h1v2h-1zM808 306h1v2h-1zM821 320h1v2h-1zM833 333h1v2h-1zM845 346h1v2h-1zM858 360h1v2h-1zM870 373h1v2h-1zM883 387h1v2h-1zM895 400h1v2h-1zM907 413h1v2h-1zM914 644h1v2h-1zM918 639h1v2h-1zM920 427h1v2h-1zM921 635h1v2h-1zM922 633h1v2h-1zM924 630h1v2h-1zM925 628h1v2h-1zM926 625h1v3h-1zM927 623h1v2h-1zM928 620h1v3h-1zM929 617h1v3h-1zM930 613h1v4h-1zM931 607h1v6h-1zM932 598h1v9h-1zM431 121h9v1h-9zM425 122h6v1h-6zM637 122h1v1h-1zM421 123h4v1h-4zM638 123h1v1h-1zM418 124h3v1h-3zM639 124h1v1h-1zM415 125h3v1h-3zM640 125h1v1h-1zM413 126h2v1h-2zM641 126h1v1h-1zM410 127h3v1h-3zM642 127h1v1h-1zM408 128h2v1h-2zM643 128h1v1h-1zM406 129h2v1h-2zM644 129h1v1h-1zM405 130h1v1h-1zM645 130h1v1h-1zM403 131h2v1h-2zM646 131h1v1h-1zM401 132h2v1h-2zM647 132h1v1h-1zM400 133h1v1h-1zM399 134h1v1h-1zM397 135h2v1h-2zM649 135h1v1h-1zM396 136h1v1h-1zM650 136h1v1h-1zM395 137h1v1h-1zM651 137h1v1h-1zM394 138h1v1h-1zM652 138h1v1h-1zM392 139h2v1h-2zM653 139h1v1h-1zM391 140h1v1h-1zM654 140h1v1h-1zM390 141h1v1h-1zM655 141h1v1h-1zM389 142h1v1h-1zM656 142h1v1h-1zM657 143h1v1h-1zM658 144h1v1h-1zM387 145h1v1h-1zM659 145h1v1h-1zM386 146h1v1h-1zM385 147h1v1h-1zM661 148h1v1h-1zM662 149h1v1h-1zM383 150h1v1h-1zM663 150h1v1h-1zM382 151h1v1h-1zM664 151h1v1h-1zM665 152h1v1h-1zM666 153h1v1h-1zM667 154h1v1h-1zM668 155h1v1h-1zM379 156h1v1h-1zM669 156h1v1h-1zM670 157h1v1h-1zM671 158h1v1h-1zM673 161h1v1h-1zM674 162h1v1h-1zM675 163h1v1h-1zM676 164h1v1h-1zM677 165h1v1h-1zM678 166h1v1h-1zM679 167h1v1h-1zM680 168h1v1h-1zM681 169h1v1h-1zM682 170h1v1h-1zM683 171h1v1h-1zM684 172h1v1h-1zM686 175h1v1h-1zM687 176h1v1h-1zM688 177h1v1h-1zM689 178h1v1h-1zM690 179h1v1h-1zM691 180h1v1h-1zM692 181h1v1h-1zM693 182h1v1h-1zM694 183h1v1h-1zM695 184h1v1h-1zM696 185h1v1h-1zM698 188h1v1h-1zM699 189h1v1h-1zM700 190h1v1h-1zM701 191h1v1h-1zM702 192h1v1h-1zM703 193h1v1h-1zM704 194h1v1h-1zM705 195h1v1h-1zM706 196h1v1h-1zM707 197h1v1h-1zM708 198h1v1h-1zM710 201h1v1h-1zM711 202h1v1h-1zM712 203h1v1h-1zM713 204h1v1h-1zM714 205h1v1h-1zM715 206h1v1h-1zM716 207h1v1h-1zM717 208h1v1h-1zM718 209h1v1h-1zM719 210h1v1h-1zM720 211h1v1h-1zM721 212h1v1h-1zM723 215h1v1h-1zM724 216h1v1h-1zM725 217h1v1h-1zM726 218h1v1h-1zM727 219h1v1h-1zM728 220h1v1h-1zM729 221h1v1h-1zM730 222h1v1h-1zM731 223h1v1h-1zM732 224h1v1h-1zM733 225h1v1h-1zM735 228h1v1h-1zM736 229h1v1h-1zM737 230h1v1h-1zM738 231h1v1h-1zM739 232h1v1h-1zM740 233h1v1h-1zM741 234h1v1h-1zM742 235h1v1h-1zM743 236h1v1h-1zM744 237h1v1h-1zM745 238h1v1h-1zM747 241h1v1h-1zM748 242h1v1h-1zM749 243h1v1h-1zM750 244h1v1h-1zM751 245h1v1h-1zM752 246h1v1h-1zM753 247h1v1h-1zM754 248h1v1h-1zM755 249h1v1h-1zM756 250h1v1h-1zM757 251h1v1h-1zM758 252h1v1h-1zM760 255h1v1h-1zM761 256h1v1h-1zM762 257h1v1h-1zM763 258h1v1h-1zM764 259h1v1h-1zM765 260h1v1h-1zM766 261h1v1h-1zM767 262h1v1h-1zM768 263h1v1h-1zM769 264h1v1h-1zM770 265h1v1h-1zM772 268h1v1h-1zM773 269h1v1h-1zM774 270h1v1h-1zM775 271h1v1h-1zM776 272h1v1h-1zM777 273h1v1h-1zM778 274h1v1h-1zM779 275h1v1h-1zM780 276h1v1h-1zM781 277h1v1h-1zM782 278h1v1h-1zM783 279h1v1h-1zM785 282h1v1h-1zM786 283h1v1h-1zM787 284h1v1h-1zM788 285h1v1h-1zM789 286h1v1h-1zM790 287h1v1h-1zM791 288h1v1h-1zM792 289h1v1h-1zM793 290h1v1h-1zM794 291h1v1h-1zM795 292h1v1h-1zM797 295h1v1h-1zM798 296h1v1h-1zM799 297h1v1h-1zM800 298h1v1h-1zM801 299h1v1h-1zM802 300h1v1h-1zM803 301h1v1h-1zM804 302h1v1h-1zM805 303h1v1h-1zM806 304h1v1h-1zM807 305h1v1h-1zM809 308h1v1h-1zM810 309h1v1h-1zM811 310h1v1h-1zM812 311h1v1h-1zM813 312h1v1h-1zM814 313h1v1h-1zM815 314h1v1h-1zM816 315h1v1h-1zM817 316h1v1h-1zM818 317h1v1h-1zM819 318h1v1h-1zM820 319h1v1h-1zM822 322h1v1h-1zM823 323h1v1h-1zM824 324h1v1h-1zM825 325h1v1h-1zM826 326h1v1h-1zM827 327h1v1h-1zM828 328h1v1h-1zM829 329h1v1h-1zM830 330h1v1h-1zM831 331h1v1h-1zM832 332h1v1h-1zM834 335h1v1h-1zM835 336h1v1h-1zM836 337h1v1h-1zM837 338h1v1h-1zM838 339h1v1h-1zM839 340h1v1h-1zM840 341h1v1h-1zM841 342h1v1h-1zM842 343h1v1h-1zM843 344h1v1h-1zM844 345h1v1h-1zM846 348h1v1h-1zM847 349h1v1h-1zM848 350h1v1h-1zM849 351h1v1h-1zM850 352h1v1h-1zM851 353h1v1h-1zM852 354h1v1h-1zM853 355h1v1h-1zM854 356h1v1h-1zM855 357h1v1h-1zM856 358h1v1h-1zM857 359h1v1h-1zM859 362h1v1h-1zM860 363h1v1h-1zM861 364h1v1h-1zM862 365h1v1h-1zM863 366h1v1h-1zM864 367h1v1h-1zM865 368h1v1h-1zM866 369h1v1h-1zM867 370h1v1h-1zM868 371h1v1h-1zM869 372h1v1h-1zM871 375h1v1h-1zM872 376h1v1h-1zM873 377h1v1h-1zM874 378h1v1h-1zM875 379h1v1h-1zM876 380h1v1h-1zM877 381h1v1h-1zM878 382h1v1h-1zM879 383h1v1h-1zM880 384h1v1h-1zM881 385h1v1h-1zM882 386h1v1h-1zM884 389h1v1h-1zM885 390h1v1h-1zM886 391h1v1h-1zM887 392h1v1h-1zM888 393h1v1h-1zM889 394h1v1h-1zM890 395h1v1h-1zM891 396h1v1h-1zM892 397h1v1h-1zM893 398h1v1h-1zM894 399h1v1h-1zM896 402h1v1h-1zM897 403h1v1h-1zM898 404h1v1h-1zM899 405h1v1h-1zM900 406h1v1h-1zM901 407h1v1h-1zM902 408h1v1h-1zM903 409h1v1h-1zM904 410h1v1h-1zM905 411h1v1h-1zM906 412h1v1h-1zM908 415h1v1h-1zM909 416h1v1h-1zM910 417h1v1h-1zM911 418h1v1h-1zM912 419h1v1h-1zM913 420h1v1h-1zM914 421h1v1h-1zM915 422h1v1h-1zM916 423h1v1h-1zM917 424h1v1h-1zM918 425h1v1h-1zM919 426h1v1h-1zM921 429h1v1h-1zM922 430h1v1h-1zM923 431h1v1h-1zM924 432h1v1h-1zM925 433h1v1h-1zM926 434h1v1h-1zM927 435h1v1h-1zM928 436h1v1h-1zM929 437h1v1h-1zM930 438h1v1h-1zM931 439h1v1h-1zM932 440h1v1h-1zM379 632h1v1h-1zM923 632h1v1h-1zM382 637h1v1h-1zM920 637h1v1h-1zM383 638h1v1h-1zM919 638h1v1h-1zM385 641h1v1h-1zM917 641h1v1h-1zM386 642h1v1h-1zM916 642h1v1h-1zM387 643h1v1h-1zM915 643h1v1h-1zM389 646h1v1h-1zM913 646h1v1h-1zM390 647h1v1h-1zM912 647h1v1h-1zM391 648h1v1h-1zM911 648h1v1h-1zM392 649h2v1h-2zM909 649h2v1h-2zM394 650h1v1h-1zM908 650h1v1h-1zM395 651h1v1h-1zM907 651h1v1h-1zM396 652h1v1h-1zM906 652h1v1h-1zM397 653h2v1h-2zM904 653h2v1h-2zM399 654h1v1h-1zM903 654h1v1h-1zM400 655h1v1h-1zM902 655h1v1h-1zM401 656h2v1h-2zM900 656h2v1h-2zM403 657h2v1h-2zM898 657h2v1h-2zM405 658h1v1h-1zM897 658h1v1h-1zM406 659h2v1h-2zM895 659h2v1h-2zM408 660h2v1h-2zM893 660h2v1h-2zM410 661h3v1h-3zM890 661h3v1h-3zM413 662h2v1h-2zM888 662h2v1h-2zM415 663h3v1h-3zM885 663h3v1h-3zM418 664h3v1h-3zM882 664h3v1h-3zM421 665h4v1h-4zM878 665h4v1h-4zM425 666h6v1h-6zM872 666h6v1h-6zM431 667h9v1h-9zM863 667h9v1h-9z" fill="#000"/></svg>
 <div class="abs" style="left:272px;top:111.600px;font-size:13.700px;line-height:13.500px;letter-spacing:0.540px;color:#000;white-space:pre;-webkit-text-stroke:0.150px #000;will-change:transform">Clic : selectionne l'objet
Ctrl+clic : selection multiple
Maj.+clic : selectionne les objets similaires
Clic (maintenu) : creer une fenetre de selection
Ctrl+clic (maintenu) sur un objet : deplace l'objet
Molette : Zoom
Clic molette (maintenu) : pivote la vue
Ctrl+clic molette (maintenu) : deplacer la vue
Clic droit : menu de l'objet
Voir la fenetre &quot;Options&quot; pour cacher l'aide
(&quot;options de la vue&quot;-&gt;&quot;OSD&quot;)</div>
 <div class="frame" style="left:269px;top:686px;width:765px;height:219px"></div>
 <div class="cap" style="left:270px;top:687px;width:763px;height:17px"><span style="letter-spacing:0.190px">Programme CN</span><svg class="cx" viewBox="0 0 11 11"><rect x=".5" y=".5" width="10" height="10" rx="1.6" fill="#e4e4e4" stroke="#000"/><path d="M2.600 2.600l5.800 5.800M8.400 2.600l-5.800 5.800" stroke="#000" stroke-width="2.200"/><path d="M1.800 5.500h2M7.200 5.500h2M5.500 1.800v2M5.500 7.200v2" stroke="#e4e4e4" stroke-width="1.200"/></svg></div>
 <div class="abs" style="left:270px;top:704px;width:763px;height:200px;background:#8e8e8e"></div>
 <div class="pane" style="left:271px;top:705px;width:761px;height:198px;box-shadow:inset -1px -1px 0 #fff"></div>
 <svg class="abs" style="left:638.5px;top:682px" width="25" height="2" viewBox="0 0 25 2"><rect x="0" y="0" width="2" height="2" fill="#858585"/><rect x="5.5" y="0" width="2" height="2" fill="#858585"/><rect x="11" y="0" width="2" height="2" fill="#858585"/><rect x="16.5" y="0" width="2" height="2" fill="#858585"/><rect x="22" y="0" width="2" height="2" fill="#858585"/></svg>
 <svg class="abs" style="left:265px;top:494px" width="2" height="25" viewBox="0 0 2 25"><rect x="0" y="0" width="2" height="2" fill="#858585"/><rect x="0" y="5.5" width="2" height="2" fill="#858585"/><rect x="0" y="11" width="2" height="2" fill="#858585"/><rect x="0" y="16.5" width="2" height="2" fill="#858585"/><rect x="0" y="22" width="2" height="2" fill="#858585"/></svg>
</div></div>
</body>
</html>
